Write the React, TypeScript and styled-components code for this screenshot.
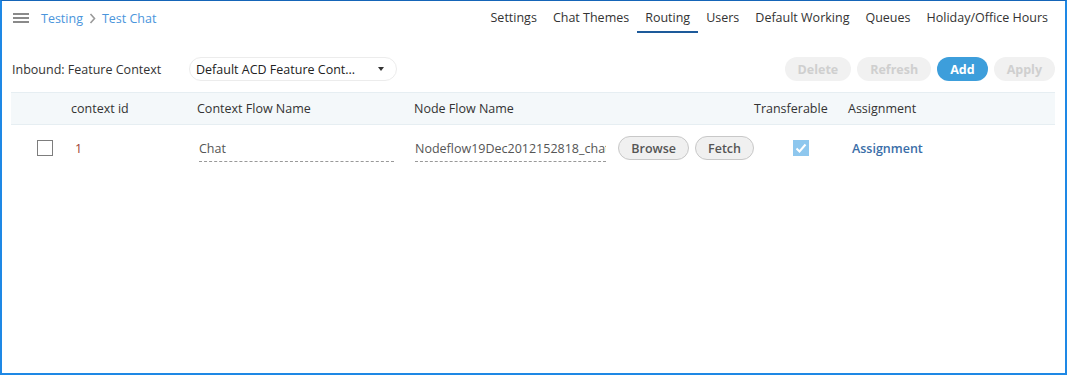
import React from 'react';
import styled, { createGlobalStyle } from 'styled-components';

const GlobalStyle = createGlobalStyle`
  html, body {
    margin: 0;
    padding: 0;
    background: #fff;
  }
  body {
    font-family: 'Open Sans', 'Noto Sans', Arial, sans-serif;
    font-size: 12.5px;
    color: #333;
  }
  * { box-sizing: border-box; }
`;

const Frame = styled.div`
  width: 1067px;
  height: 375px;
  border-top: 1px solid #1565b8;
  border-left: 2px solid #1e88e5;
  border-right: 2px solid #1e88e5;
  border-bottom: 2px solid #1e88e5;
  overflow: hidden;
  display: flex;
  flex-direction: column;
`;

const TopBar = styled.div`
  display: flex;
  align-items: center;
  justify-content: space-between;
  height: 34px;
  padding: 0 9px 0 11px;
`;

const Crumbs = styled.div`
  display: flex;
  align-items: center;
  gap: 6px;
`;

const MenuIcon = styled.div`
  width: 16px;
  height: 10px;
  display: flex;
  flex-direction: column;
  justify-content: space-between;
  margin-right: 6px;
  span {
    display: block;
    height: 2px;
    background: #8a8a8a;
  }
`;

const CrumbLink = styled.span`
  color: #4a95dc;
  font-size: 12.5px;
`;

const Tabs = styled.nav`
  display: flex;
  align-items: stretch;
  height: 100%;
`;

const Tab = styled.div<{ $active?: boolean }>`
  display: flex;
  align-items: center;
  padding: 2px 8px 0;
  font-size: 12.5px;
  color: #333;
  border-bottom: 2px solid ${(p) => (p.$active ? '#1d5a9a' : 'transparent')};
  margin-bottom: 2px;
`;

const Toolbar = styled.div`
  display: flex;
  align-items: center;
  height: 24px;
  margin-top: 22px;
  padding: 0 10px;
`;

const Label = styled.div`
  width: 177px;
  color: #333;
`;

const Select = styled.div`
  width: 208px;
  height: 24px;
  border: 1px solid #ececec;
  border-radius: 12px;
  display: flex;
  align-items: center;
  justify-content: space-between;
  padding: 0 12px 0 6px;
  color: #222;
`;

const Caret = styled.span`
  width: 0;
  height: 0;
  border-left: 3px solid transparent;
  border-right: 3px solid transparent;
  border-top: 4px solid #333;
`;

const Actions = styled.div`
  margin-left: auto;
  display: flex;
  gap: 6px;
`;

const PillButton = styled.button<{ $primary?: boolean }>`
  height: 24px;
  border: none;
  border-radius: 12px;
  padding: 0 13px;
  font-family: inherit;
  font-size: 12.5px;
  font-weight: 700;
  background: ${(p) => (p.$primary ? '#3d9edb' : '#f1f1f1')};
  color: ${(p) => (p.$primary ? '#fff' : '#cfcfcf')};
`;

const Table = styled.div`
  margin: 11px 10px 0 9px;
`;

const gridCols = '60px 126px 217px 340px 94px 1fr';

const HeadRow = styled.div`
  display: grid;
  grid-template-columns: ${gridCols};
  align-items: center;
  height: 33px;
  background: #f4f8fa;
  border-top: 1px solid #e6eef2;
  border-bottom: 1px solid #e6eef2;
  color: #333;
`;

const BodyRow = styled.div`
  display: grid;
  grid-template-columns: ${gridCols};
  align-items: center;
  height: 46px;
`;

const Cell = styled.div<{ $pl?: number }>`
  padding-left: ${(p) => p.$pl ?? 0}px;
  display: flex;
  align-items: center;
`;

const Box = styled.span<{ $checked?: boolean }>`
  width: 16px;
  height: 16px;
  border: 1px solid ${(p) => (p.$checked ? '#8ec7ee' : '#7d7d7d')};
  background: ${(p) => (p.$checked ? '#8ec7ee' : '#fff')};
  display: inline-flex;
  align-items: center;
  justify-content: center;
`;

const IdText = styled.span`
  color: #9c3b32;
`;

const Input = styled.div<{ $w: number }>`
  width: ${(p) => p.$w}px;
  border-bottom: 1px dashed #999;
  padding: 2px 0 4px;
  margin-top: 4px;
  color: #555;
  white-space: nowrap;
  overflow: hidden;
`;

const SmallButton = styled.button<{ $ml: number }>`
  height: 24px;
  margin-left: ${(p) => p.$ml}px;
  border: 1px solid #c8c8c8;
  border-radius: 12px;
  background: #f0f0f0;
  padding: 0 12px;
  font-family: inherit;
  font-size: 12.5px;
  font-weight: 600;
  color: #555;
`;

const LinkText = styled.span`
  color: #3a6ea8;
  font-weight: 600;
`;

export default function App() {
  return (
    <>
      <GlobalStyle />
      <Frame>
        <TopBar>
          <Crumbs>
            <MenuIcon>
              <span />
              <span />
              <span />
            </MenuIcon>
            <CrumbLink>Testing</CrumbLink>
            <svg width="7" height="11" viewBox="0 0 7 11">
              <path d="M1.5 1 L5.5 5.5 L1.5 10" stroke="#9a9a9a" strokeWidth="1.6" fill="none" />
            </svg>
            <CrumbLink>Test Chat</CrumbLink>
          </Crumbs>
          <Tabs>
            <Tab>Settings</Tab>
            <Tab>Chat Themes</Tab>
            <Tab $active>Routing</Tab>
            <Tab>Users</Tab>
            <Tab>Default Working</Tab>
            <Tab>Queues</Tab>
            <Tab>Holiday/Office Hours</Tab>
          </Tabs>
        </TopBar>

        <Toolbar>
          <Label>Inbound: Feature Context</Label>
          <Select>
            <span>Default ACD Feature Cont...</span>
            <Caret />
          </Select>
          <Actions>
            <PillButton>Delete</PillButton>
            <PillButton>Refresh</PillButton>
            <PillButton $primary>Add</PillButton>
            <PillButton>Apply</PillButton>
          </Actions>
        </Toolbar>

        <Table>
          <HeadRow>
            <Cell />
            <Cell>context id</Cell>
            <Cell>Context Flow Name</Cell>
            <Cell>Node Flow Name</Cell>
            <Cell>Transferable</Cell>
            <Cell>Assignment</Cell>
          </HeadRow>
          <BodyRow>
            <Cell $pl={26}>
              <Box />
            </Cell>
            <Cell $pl={4}>
              <IdText>1</IdText>
            </Cell>
            <Cell $pl={2}>
              <Input $w={195}>Chat</Input>
            </Cell>
            <Cell $pl={1}>
              <Input $w={194}>Nodeflow19Dec2012152818_chatbot</Input>
              <SmallButton $ml={12}>Browse</SmallButton>
              <SmallButton $ml={6}>Fetch</SmallButton>
            </Cell>
            <Cell $pl={39}>
              <Box $checked>
                <svg width="12" height="10" viewBox="0 0 12 10">
                  <path d="M1.5 5.5 L4.5 8.5 L10.5 1.5" stroke="#fff" strokeWidth="2" fill="none" />
                </svg>
              </Box>
            </Cell>
            <Cell $pl={4}>
              <LinkText>Assignment</LinkText>
            </Cell>
          </BodyRow>
        </Table>
      </Frame>
    </>
  );
}
